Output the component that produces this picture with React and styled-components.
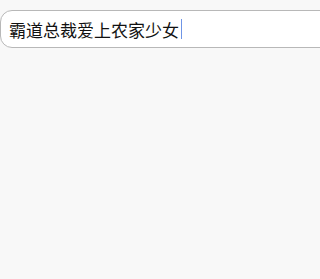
import React from "react";
import styled, { createGlobalStyle } from "styled-components";

const Global = createGlobalStyle`
  html, body {
    margin: 0;
    padding: 0;
    background: #f8f8f8;
  }
`;

const Page = styled.div`
  width: 100%;
  height: 279px;
  overflow: hidden;
  padding-top: 10px;
  box-sizing: border-box;
`;

const SearchField = styled.div`
  display: flex;
  align-items: center;
  width: calc(100% + 24px);
  height: 38px;
  box-sizing: border-box;
  padding-left: 8px;
  background: #fff;
  border: 1px solid #b8b8b8;
  border-radius: 12px;
  font-family: "Noto Sans CJK SC", "Noto Sans", sans-serif;
  font-size: 17px;
  color: #111;
`;

const Caret = styled.span`
  display: inline-block;
  width: 1px;
  height: 20px;
  margin-left: 2px;
  background: #6f95e6;
`;

export default function App() {
  return (
    <Page>
      <Global />
      <SearchField>
        霸道总裁爱上农家少女
        <Caret />
      </SearchField>
    </Page>
  );
}
